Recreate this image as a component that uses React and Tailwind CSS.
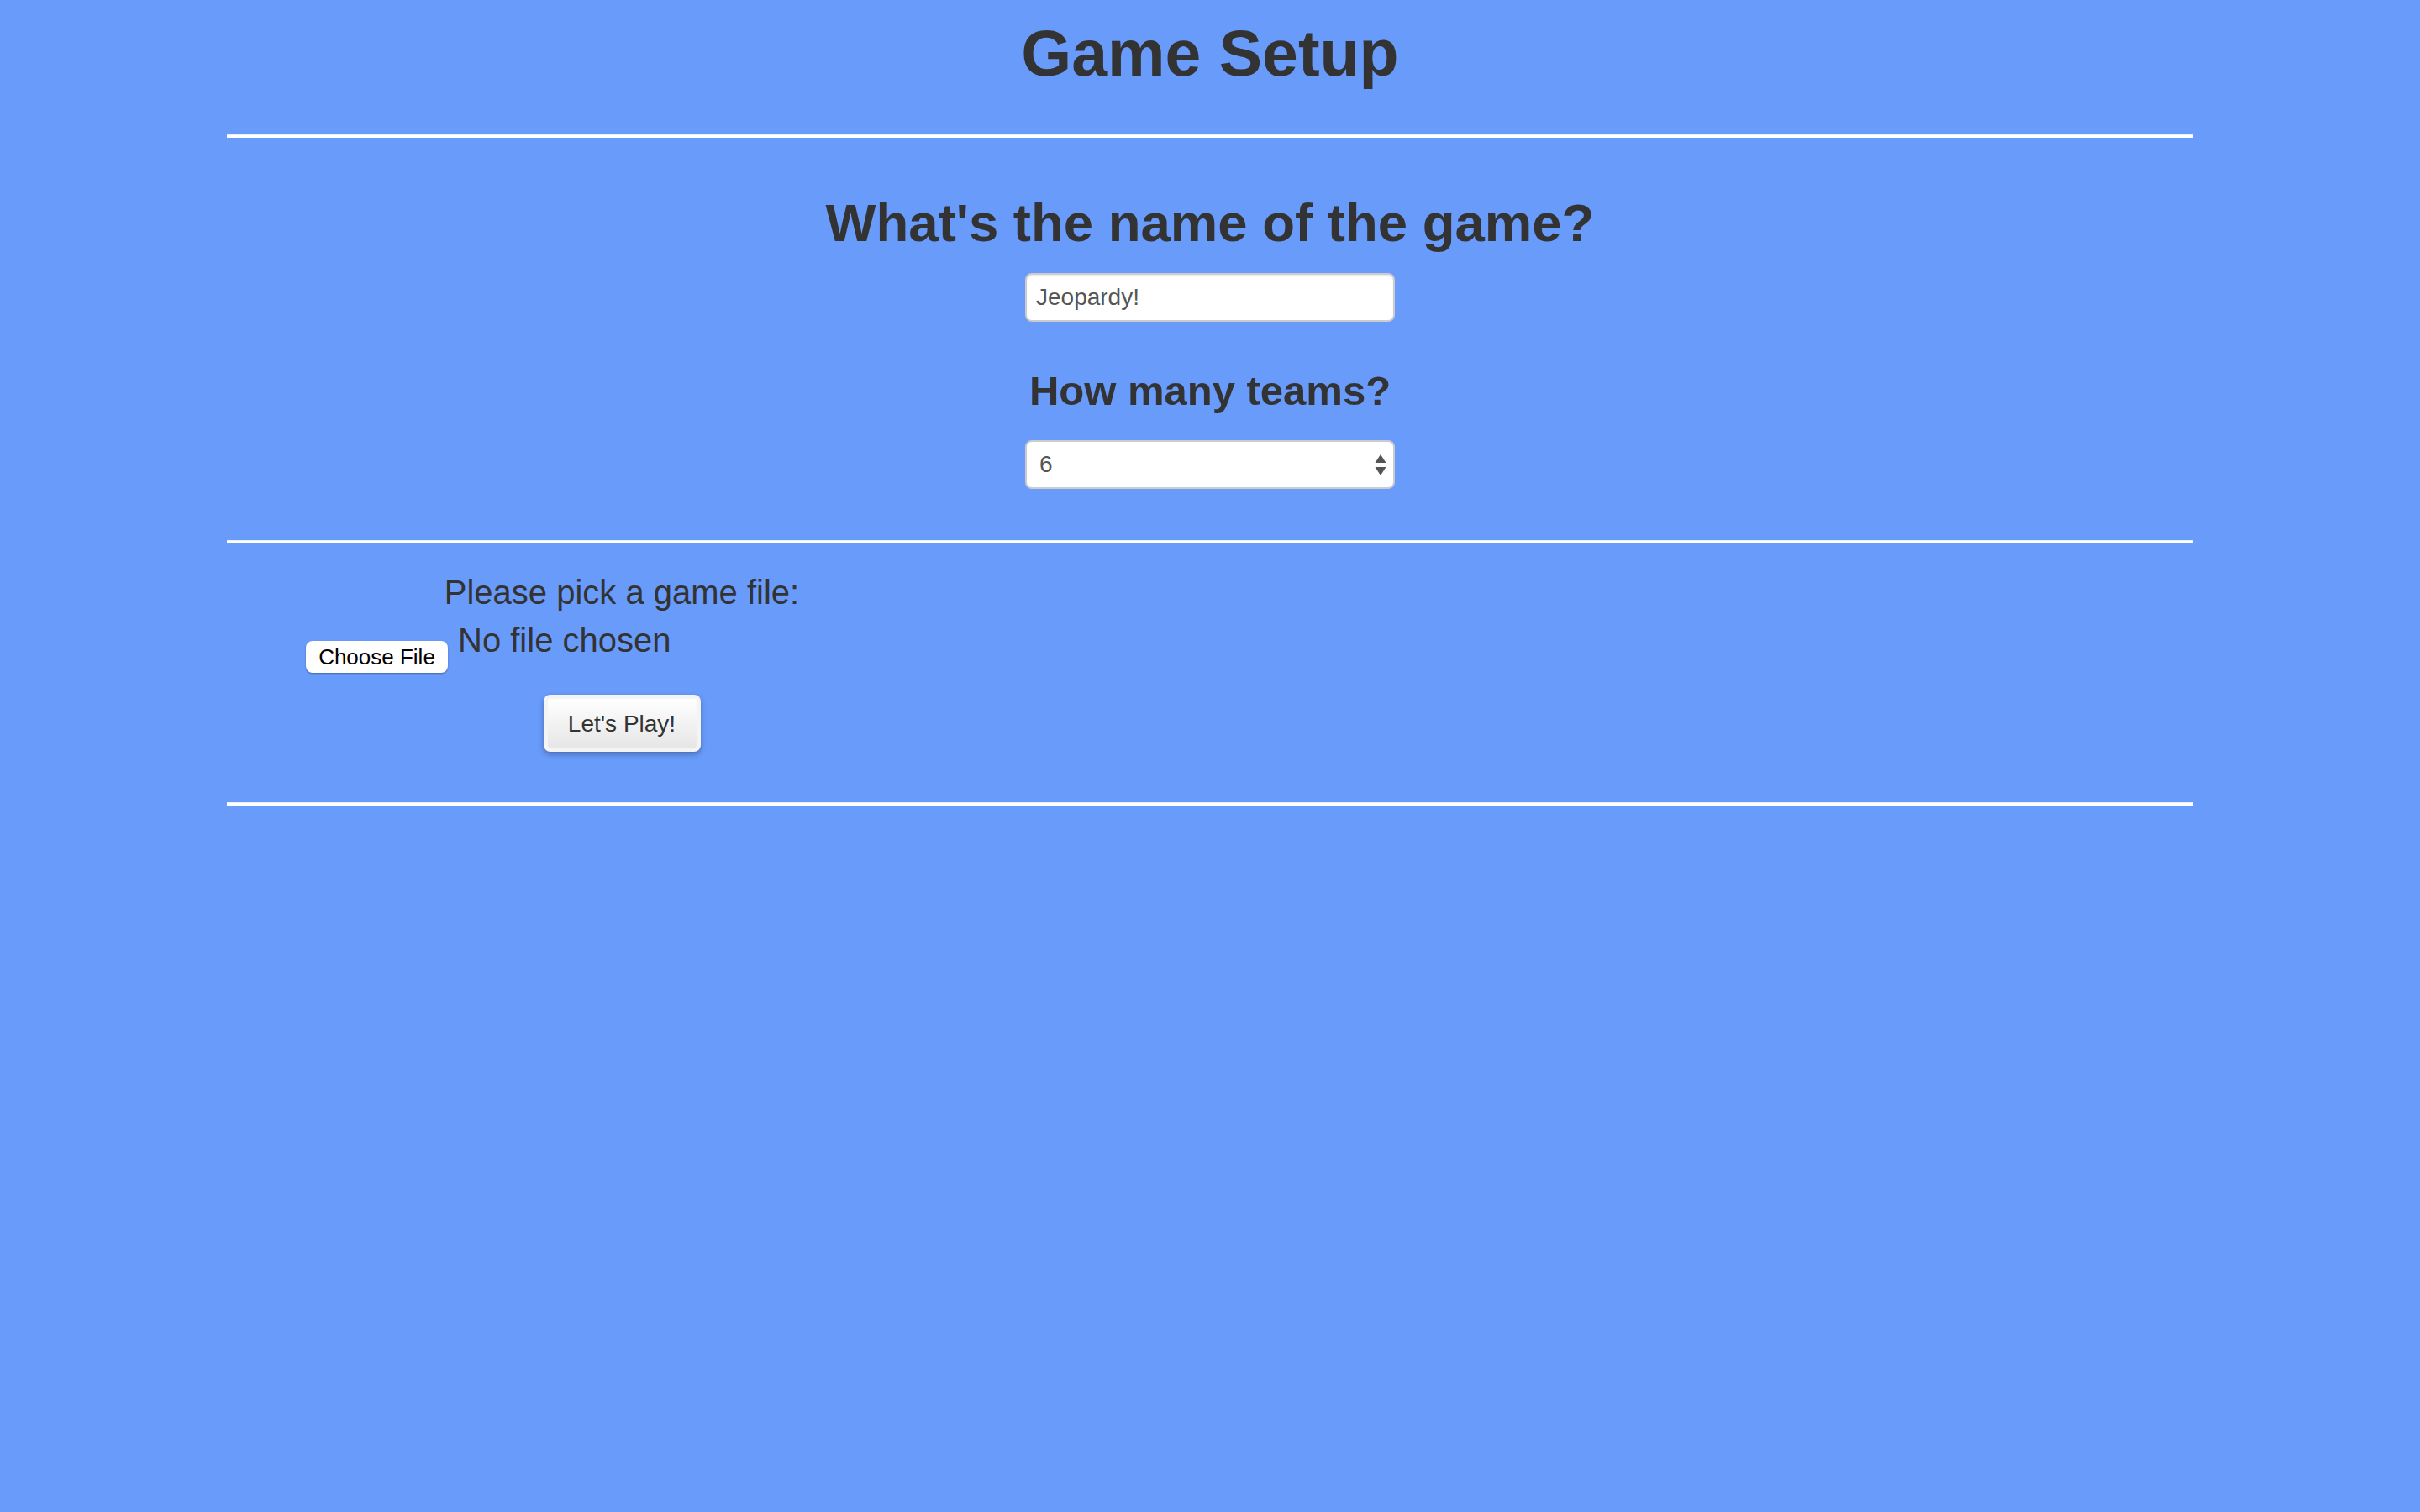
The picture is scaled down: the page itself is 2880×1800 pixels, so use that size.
import React from "react";

function Rule() {
  return <div className="h-[4px] w-full border-t border-[#e8eefc] bg-white" />;
}

export default function App() {
  return (
    <div className="min-h-screen w-full bg-[#699bfb] font-['Liberation_Sans',Arial,sans-serif] text-[#333333]">
      <div className="mx-auto flex w-[2340px] flex-col">
        <h1 className="mt-[25px] text-center text-[77px] font-bold leading-none">Game Setup</h1>
        <div className="mt-[58px]">
          <Rule />
        </div>

        <div className="flex flex-col items-center">
          <h2 className="mt-[70px] text-center text-[63.5px] font-bold leading-none">
            What's the name of the game?
          </h2>
          <div className="mt-[27px] flex h-[58px] w-[440px] items-center rounded-[8px] border-2 border-[#cccccc] bg-white pl-[11px] shadow-[inset_0_2px_2px_rgba(0,0,0,0.075)]">
            <span className="text-[28px] leading-none text-[#555555]">Jeopardy!</span>
          </div>

          <h3 className="mt-[58px] text-center text-[49px] font-bold leading-none">How many teams?</h3>
          <div className="mt-[34px] flex h-[58px] w-[440px] items-center justify-between rounded-[8px] border-2 border-[#cccccc] bg-white pl-[15px] pr-[8px]">
            <span className="text-[28px] leading-none text-[#555555]">6</span>
            <svg width="14" height="26" viewBox="0 0 14 26" className="mt-[2px]">
              <polygon points="7,0 13.5,10 0.5,10" fill="#555555" />
              <polygon points="0.5,15 13.5,15 7,25" fill="#555555" />
            </svg>
          </div>
        </div>

        <div className="mt-[61px]">
          <Rule />
        </div>

        <div className="ml-[94px] mt-[30px] flex w-[752px] flex-col items-center">
          <div className="text-center text-[40px] leading-[57px]">Please pick a game file:</div>
          <div className="flex items-start self-start">
            <button className="mt-[29px] flex h-[38px] w-[169px] items-center justify-center rounded-[8px] bg-white text-[26px] leading-none text-black shadow-[0_1px_2px_rgba(0,0,0,0.35)]">
              Choose File
            </button>
            <span className="ml-[12px] text-[40px] leading-[57px]">No file chosen</span>
          </div>
          <div className="mt-[26px] h-[68px] w-[187px] rounded-[8px] bg-[#f4f4f4] p-[5px] shadow-[0_3px_6px_rgba(0,0,0,0.3)]">
            <div className="flex h-full w-full items-center justify-center rounded-[3px] bg-gradient-to-b from-white to-[#e6e6e6] pt-[2px] text-[28px] leading-none text-[#333333]">
              Let's Play!
            </div>
          </div>
        </div>

        <div className="mt-[60px]">
          <Rule />
        </div>
      </div>
    </div>
  );
}
